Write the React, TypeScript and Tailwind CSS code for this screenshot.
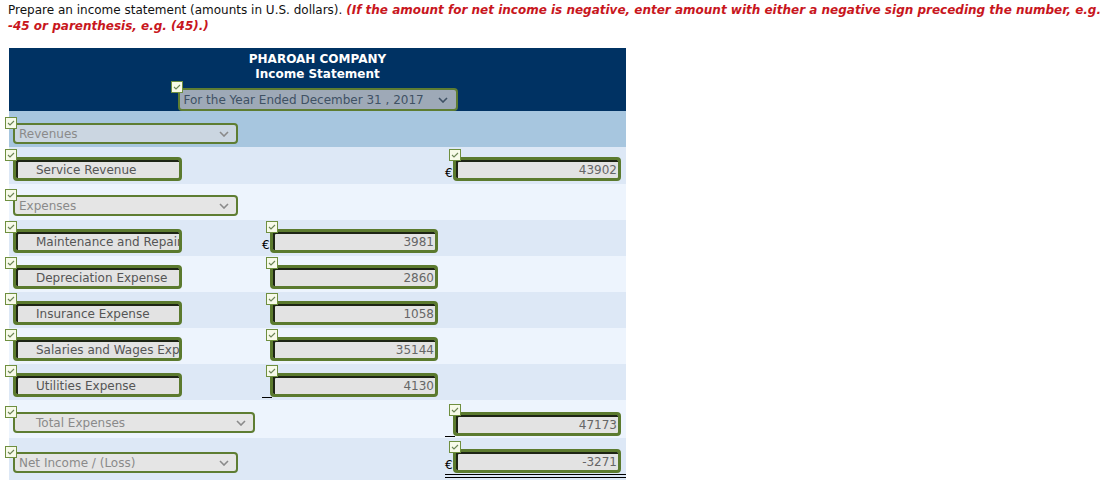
import { ReactNode } from 'react';

const font = { fontFamily: '"DejaVu Sans", Verdana, sans-serif' };

function Check({ className = '' }: { className?: string }) {
  return (
    <span
      className={`absolute w-[12px] h-[12px] border border-[#6f8f3f] bg-[#f7fae9] flex items-center justify-center z-10 ${className}`}
    >
      <svg width="8" height="6" viewBox="0 0 8 6">
        <path d="M1 3 L3 5 L7 1" fill="none" stroke="#6b8455" strokeWidth="1.1" />
      </svg>
    </span>
  );
}

function Chevron({ color = '#8a8a8a' }: { color?: string }) {
  return (
    <svg width="10" height="6" viewBox="0 0 10 6" className="shrink-0">
      <path d="M1 1 L5 5 L9 1" fill="none" stroke={color} strokeWidth="1.6" />
    </svg>
  );
}

function LabelBox({ text }: { text: string }) {
  return (
    <div className="relative ml-[4px] w-[169px]">
      <Check className="-left-[8px] -top-[8px]" />
      <div className="h-[24px] rounded-[4px] border-[3px] border-[#5b7a2e] bg-[#e3e3e3] shadow-[inset_2px_2px_0_#1d2414] pl-[20px] pt-[1px] flex items-center overflow-hidden whitespace-nowrap text-[12px] text-[#555]">
        {text}
      </div>
    </div>
  );
}

function SelectBox({
  text,
  width,
  indent = false,
  bg = 'bg-[#e5e5e5]',
}: {
  text: string;
  width: string;
  indent?: boolean;
  bg?: string;
}) {
  return (
    <div className={`relative ml-[4px] ${width}`}>
      <Check className="-left-[8px] -top-[6px]" />
      <div
        className={`h-[21px] rounded-[4px] border-2 border-[#5e7d32] ${bg} ${indent ? 'pl-[21px]' : 'pl-[4px]'} pr-[7px] flex items-center justify-between text-[12px] text-[#8a8a8a]`}
      >
        <span className="whitespace-nowrap pt-[1px]">{text}</span>
        <Chevron />
      </div>
    </div>
  );
}

function Amount({
  value,
  euro = false,
  under = 'none',
  ml,
}: {
  value: string;
  euro?: boolean;
  under?: 'none' | 'single' | 'double';
  ml: string;
}) {
  return (
    <div className={`relative flex items-end ${ml}`}>
      <span className="w-[8px] text-[12px] leading-[12px] text-black mb-[2px]">
        {euro ? '€' : ''}
      </span>
      <div className="relative w-[168px]">
        <Check className="-left-[4px] -top-[8px]" />
        <div className="h-[24px] rounded-[4px] border-[3px] border-[#5b7a2e] bg-[#e3e3e3] shadow-[inset_2px_2px_0_#1d2414] pr-[1px] pt-[1px] flex items-center justify-end text-[12px] text-[#666]">
          {value}
        </div>
      </div>
      {under === 'single' && (
        <span className="absolute left-0 -bottom-[1px] w-[10px] border-b border-black" />
      )}
      {under === 'double' && (
        <span className="absolute left-0 right-0 -bottom-[5px] h-[4px] border-y border-black" />
      )}
    </div>
  );
}

function Row({
  h,
  bg,
  pt,
  children,
}: {
  h: string;
  bg: string;
  pt: string;
  children: ReactNode;
}) {
  return (
    <div className={`grid grid-cols-[249px_185px_183px] items-start ${h} ${bg} ${pt}`}>
      {children}
    </div>
  );
}

const dark = 'bg-[#dde8f6]';
const light = 'bg-[#edf4fd]';

export default function App() {
  return (
    <div className="bg-white w-[1106px] h-[493px] overflow-hidden" style={font}>
      <p className="pl-[8px] pt-[2px] text-[12px] leading-[16px] text-[#111]">
        Prepare an income statement (amounts in U.S. dollars).{' '}
        <em className="font-bold text-[#c8161d]">
          (If the amount for net income is negative, enter amount with either a negative sign
          preceding the number, e.g. -45 or parenthesis, e.g. (45).)
        </em>
      </p>

      <div className="ml-[9px] mt-[14px] w-[617px]">
        <div className="h-[63px] bg-[#003263] pt-[4px] flex flex-col items-center text-white font-bold text-[12px] leading-[15px]">
          <div>PHAROAH COMPANY</div>
          <div>Income Statement</div>
          <div className="relative mt-[6px] w-[280px]">
            <Check className="-left-[7px] -top-[7px]" />
            <div className="h-[23px] rounded-[4px] border-2 border-[#5e7d32] bg-[#9ea9b7] pl-[4px] pr-[8px] flex items-center justify-between font-normal text-[12px] text-[#3f5164]">
              <span className="whitespace-nowrap pt-[1px]">For the Year Ended December 31 , 2017</span>
              <Chevron color="#3f5164" />
            </div>
          </div>
        </div>

        <Row h="h-[36px]" bg="bg-[#a7c6df]" pt="pt-[12px]">
          <SelectBox text="Revenues" width="w-[225px]" bg="bg-[#cbd6e1]" />
          <div />
          <div />
        </Row>

        <Row h="h-[37px]" bg={dark} pt="pt-[10px]">
          <LabelBox text="Service Revenue" />
          <div />
          <Amount value="43902" euro ml="ml-[2px]" />
        </Row>

        <Row h="h-[36px]" bg={light} pt="pt-[11px]">
          <SelectBox text="Expenses" width="w-[225px]" />
          <div />
          <div />
        </Row>

        <Row h="h-[36px]" bg={dark} pt="pt-[9px]">
          <LabelBox text="Maintenance and Repairs Expense" />
          <Amount value="3981" euro ml="ml-[4px]" />
          <div />
        </Row>

        <Row h="h-[36px]" bg={light} pt="pt-[9px]">
          <LabelBox text="Depreciation Expense" />
          <Amount value="2860" ml="ml-[4px]" />
          <div />
        </Row>

        <Row h="h-[36px]" bg={dark} pt="pt-[9px]">
          <LabelBox text="Insurance Expense" />
          <Amount value="1058" ml="ml-[4px]" />
          <div />
        </Row>

        <Row h="h-[36px]" bg={light} pt="pt-[9px]">
          <LabelBox text="Salaries and Wages Expense" />
          <Amount value="35144" ml="ml-[4px]" />
          <div />
        </Row>

        <Row h="h-[36px]" bg={dark} pt="pt-[9px]">
          <LabelBox text="Utilities Expense" />
          <Amount value="4130" under="single" ml="ml-[4px]" />
          <div />
        </Row>

        <Row h="h-[38px]" bg={light} pt="pt-[12px]">
          <SelectBox text="Total Expenses" width="w-[242px]" indent />
          <div />
          <Amount value="47173" under="single" ml="ml-[2px]" />
        </Row>

        <Row h="h-[42px]" bg={dark} pt="pt-[11px]">
          <div className="pt-[3px]">
            <SelectBox text="Net Income / (Loss)" width="w-[225px]" />
          </div>
          <div />
          <Amount value="-3271" euro under="double" ml="ml-[2px]" />
        </Row>
      </div>
    </div>
  );
}
